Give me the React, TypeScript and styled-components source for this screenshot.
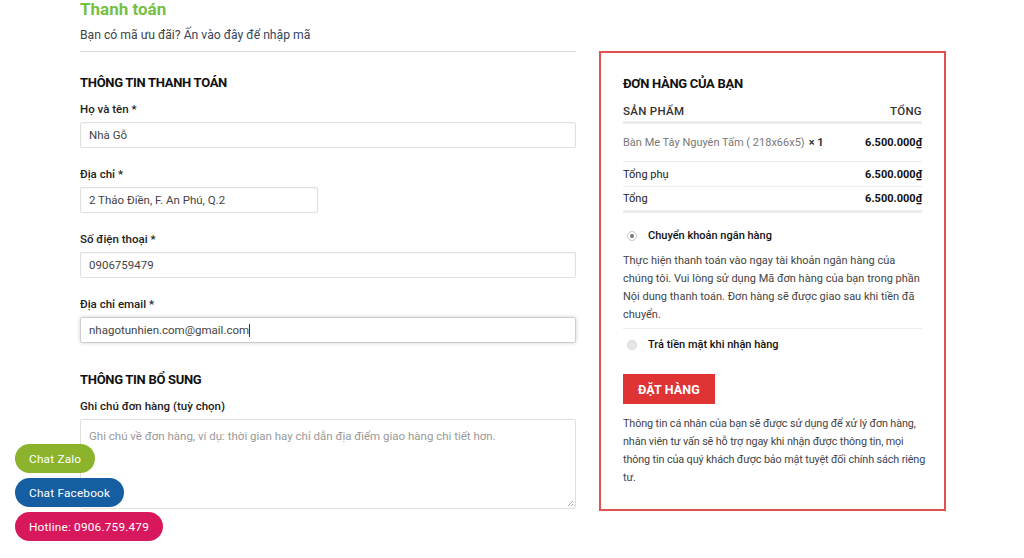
import React from "react";
import styled, { createGlobalStyle } from "styled-components";

const GlobalStyle = createGlobalStyle`
  html, body {
    margin: 0;
    padding: 0;
    background: #fff;
    font-family: Roboto, "Noto Sans", "Liberation Sans", sans-serif;
    color: #333;
  }
  * { box-sizing: border-box; }
`;

const Page = styled.div`
  width: 1024px;
  height: 558px;
  overflow: hidden;
  position: relative;
  padding: 0 0 0 80px;
`;

const PageTitle = styled.div`
  font-size: 17px;
  font-weight: 700;
  color: #76c043;
  line-height: 20px;
  margin-top: -1px;
`;

const Coupon = styled.div`
  font-size: 12.2px;
  color: #444;
  line-height: 18px;
  margin-top: 7px;
  padding-bottom: 7px;
  width: 496px;
  border-bottom: 1px solid #d6d6d6;
`;

const Link = styled.a`
  color: #334862;
  text-decoration: none;
`;

const Columns = styled.div`
  display: flex;
  gap: 23px;
  align-items: flex-start;
`;

const LeftCol = styled.div`
  width: 496px;
  padding-top: 22px;
`;

const Heading = styled.h3<{ $mt?: number }>`
  margin: ${(p) => p.$mt ?? 0}px 0 0;
  font-size: 13px;
  font-weight: 700;
  letter-spacing: -0.3px;
  color: #111;
  line-height: 18px;
  text-transform: uppercase;
`;

const Field = styled.div`
  margin-top: 9px;
  margin-bottom: 18px;
`;

const Label = styled.div`
  font-size: 11.5px;
  font-weight: 500;
  color: #222;
  line-height: 16px;
`;

const Input = styled.div<{ $w?: number; $focus?: boolean }>`
  margin-top: 5px;
  width: ${(p) => (p.$w ? `${p.$w}px` : "100%")};
  height: 26px;
  border: 1px solid #ddd;
  border-radius: 2px;
  padding: 0 8px;
  display: flex;
  align-items: center;
  font-size: 11.5px;
  color: #444;
  box-shadow: ${(p) =>
    p.$focus ? "0 0 4px rgba(0,0,0,0.18)" : "inset 0 1px 2px rgba(0,0,0,0.04)"};
  border-color: ${(p) => (p.$focus ? "#ccc" : "#e0e0e0")};
`;

const Caret = styled.span`
  display: inline-block;
  width: 1px;
  height: 13px;
  background: #333;
`;

const TextArea = styled.div`
  margin-top: 5px;
  width: 100%;
  height: 90px;
  border: 1px solid #e0e0e0;
  border-radius: 2px;
  padding: 9px 8px;
  font-size: 11.5px;
  color: #999;
  position: relative;
`;

const Grip = styled.svg`
  position: absolute;
  right: 1px;
  bottom: 1px;
`;

const OrderBox = styled.div`
  width: 347px;
  height: 460px;
  margin-top: -1px;
  border: 2px solid #e35050;
  padding: 22px 22px 0 22px;
`;

const Row = styled.div<{ $h: number; $border?: number; $mt?: number }>`
  display: flex;
  justify-content: space-between;
  align-items: center;
  height: ${(p) => p.$h}px;
  margin-top: ${(p) => p.$mt ?? 0}px;
  border-bottom: ${(p) => p.$border ?? 1}px solid #ececec;
  font-size: 11px;
  color: #222;
`;

const HeadCell = styled.span`
  font-size: 11.5px;
  font-weight: 500;
  letter-spacing: 0.3px;
  color: #333;
`;

const Product = styled.span`
  color: #777;
  font-size: 11px;
`;

const Qty = styled.b`
  color: #333;
  font-weight: 700;
  margin-left: 4px;
`;

const Price = styled.span`
  font-weight: 700;
  color: #111;
`;

const Method = styled.div<{ $mt: number }>`
  display: flex;
  align-items: center;
  margin-top: ${(p) => p.$mt}px;
  font-size: 11px;
  font-weight: 500;
  color: #111;
  line-height: 16px;
`;

const Radio = styled.span<{ $on?: boolean }>`
  width: 10px;
  height: 10px;
  border-radius: 50%;
  background: ${(p) => (p.$on ? "#fff" : "#e6e6e6")};
  border: 1px solid ${(p) => (p.$on ? "#c8c8c8" : "#d8d8d8")};
  display: inline-flex;
  align-items: center;
  justify-content: center;
  margin: 0 11px 0 4px;
  &::after {
    content: "";
    width: 4px;
    height: 4px;
    border-radius: 50%;
    background: ${(p) => (p.$on ? "#777" : "transparent")};
  }
`;

const Desc = styled.p`
  margin: 8px 0 0;
  font-size: 11px;
  line-height: 18px;
  color: #444;
  padding-bottom: 4px;
  border-bottom: 1px solid #ececec;
`;

const OrderButton = styled.button`
  margin-top: 21px;
  height: 30px;
  padding: 0 15px;
  background: #e03434;
  color: #fff;
  border: none;
  font-family: inherit;
  font-size: 12.5px;
  font-weight: 700;
  letter-spacing: 0.1px;
`;

const Privacy = styled.p`
  margin: 11px -5px 0 0;
  font-size: 10.8px;
  letter-spacing: -0.12px;
  line-height: 18px;
  color: #444;
`;

const FloatStack = styled.div`
  position: absolute;
  left: 15px;
  top: 444px;
  display: flex;
  flex-direction: column;
  align-items: flex-start;
  gap: 5px;
`;

const Pill = styled.div<{ $bg: string }>`
  height: 29px;
  padding: 0 14px;
  border-radius: 15px;
  background: ${(p) => p.$bg};
  color: #fff;
  font-size: 11.8px;
  display: flex;
  align-items: center;
  letter-spacing: 0.2px;
`;

export default function App() {
  return (
    <Page>
      <GlobalStyle />
      <PageTitle>Thanh toán</PageTitle>
      <Coupon>
        Bạn có mã ưu đãi? <Link>Ấn vào đây để nhập mã</Link>
      </Coupon>
      <Columns>
        <LeftCol>
          <Heading>Thông tin thanh toán</Heading>
          <Field>
            <Label>Họ và tên *</Label>
            <Input>Nhà Gỗ</Input>
          </Field>
          <Field>
            <Label>Địa chỉ *</Label>
            <Input $w={238}>2 Thảo Điền, F. An Phú, Q.2</Input>
          </Field>
          <Field>
            <Label>Số điện thoại *</Label>
            <Input>0906759479</Input>
          </Field>
          <Field>
            <Label>Địa chỉ email *</Label>
            <Input $focus>
              nhagotunhien.com@gmail.com
              <Caret />
            </Input>
          </Field>
          <Heading $mt={28}>Thông tin bổ sung</Heading>
          <Field>
            <Label>Ghi chú đơn hàng (tuỳ chọn)</Label>
            <TextArea>
              Ghi chú về đơn hàng, ví dụ: thời gian hay chỉ dẫn địa điểm giao hàng chi tiết hơn.
              <Grip width="8" height="8" viewBox="0 0 8 8">
                <path d="M7 2 L2 7 M7 5 L5 7" stroke="#aaa" strokeWidth="1" />
              </Grip>
            </TextArea>
          </Field>
        </LeftCol>
        <OrderBox>
          <Heading>Đơn hàng của bạn</Heading>
          <Row $h={24} $mt={7} $border={3}>
            <HeadCell>SẢN PHẨM</HeadCell>
            <HeadCell>TỔNG</HeadCell>
          </Row>
          <Row $h={38}>
            <Product>
              Bàn Me Tây Nguyên Tấm ( 218x66x5)<Qty>× 1</Qty>
            </Product>
            <Price>6.500.000₫</Price>
          </Row>
          <Row $h={25}>
            <span>Tổng phụ</span>
            <Price>6.500.000₫</Price>
          </Row>
          <Row $h={26} $border={3}>
            <span>Tổng</span>
            <Price>6.500.000₫</Price>
          </Row>
          <Method $mt={15}>
            <Radio $on />
            Chuyển khoản ngân hàng
          </Method>
          <Desc>
            Thực hiện thanh toán vào ngay tài khoản ngân hàng của chúng tôi. Vui lòng sử dụng Mã
            đơn hàng của bạn trong phần Nội dung thanh toán. Đơn hàng sẽ được giao sau khi tiền đã
            chuyển.
          </Desc>
          <Method $mt={8}>
            <Radio />
            Trả tiền mặt khi nhận hàng
          </Method>
          <OrderButton>ĐẶT HÀNG</OrderButton>
          <Privacy>
            Thông tin cá nhân của bạn sẽ được sử dụng để xử lý đơn hàng, nhân viên tư vấn sẽ hỗ
            trợ ngay khi nhận được thông tin, mọi thông tin của quý khách được bảo mật tuyệt đối{" "}
            <Link>chính sách riêng tư</Link>.
          </Privacy>
        </OrderBox>
      </Columns>
      <FloatStack>
        <Pill $bg="#8bb42c">Chat Zalo</Pill>
        <Pill $bg="#155ea2">Chat Facebook</Pill>
        <Pill $bg="#d7185c">Hotline: 0906.759.479</Pill>
      </FloatStack>
    </Page>
  );
}
